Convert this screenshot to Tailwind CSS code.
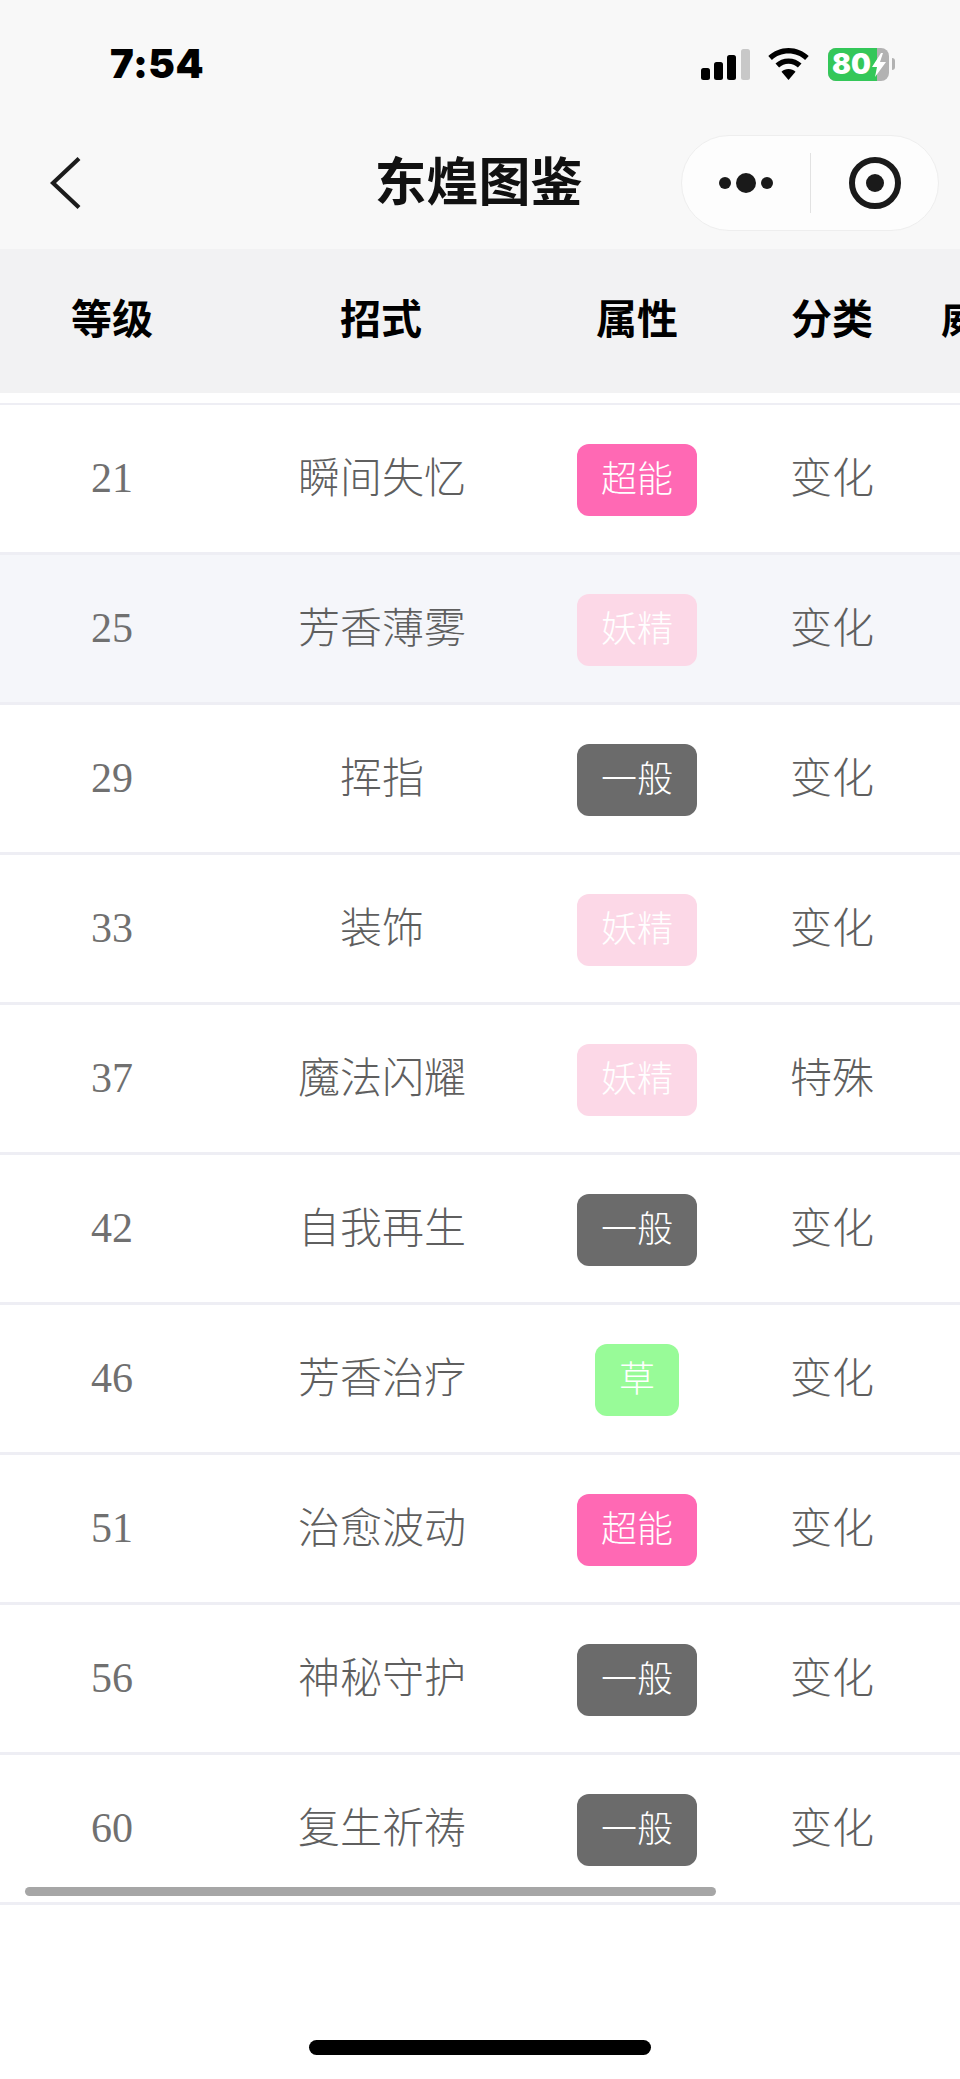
<!DOCTYPE html>
<html lang="zh-CN">
<head>
<meta charset="utf-8">
<title>东煌图鉴</title>
<script src="https://cdn.jsdelivr.net/npm/@tailwindcss/browser@4"></script>
</head>
<body class="bg-white">
<div class="relative w-[960px] h-[2079px] overflow-hidden bg-white font-['Noto_Sans_CJK_SC','Noto_Sans',sans-serif]">
  <header class="bg-[#f8f8f8] h-[249px] flex flex-col">
    <div class="h-[128px] pl-[110px] pr-[65px] flex items-center justify-between">
      <span class="font-['Inter',sans-serif] font-black text-[40px] leading-none text-black tracking-[0.5px]">7:54</span>
      <div class="flex items-center">
        <svg class="w-[49px] h-[31px]" viewBox="0 0 49 31"><rect x="0" y="19" width="9" height="12" rx="2.5" fill="#000"/><rect x="13" y="13" width="9" height="18" rx="2.5" fill="#000"/><rect x="26" y="6" width="9" height="25" rx="2.5" fill="#000"/><rect x="40" y="0" width="9" height="31" rx="2.5" fill="#c8c8c8"/></svg>
        <svg class="ml-[18px] w-[41px] h-[32px]" viewBox="0 0 41 32"><path d="M20.5 0C12.7 0 5.7 3 .3 8l3.6 3.9C8.2 7.800 14 5.500 20.500 5.500S32.800 7.800 37.100 11.900L40.700 8C35.300 3 28.300 0 20.500 0Z" fill="#000"/><path d="M20.500 10.500c-5 0-9.600 1.900-13 5.100l3.600 3.900c2.500-2.300 5.800-3.700 9.400-3.700s6.900 1.400 9.400 3.700l3.600-3.900c-3.400-3.200-8-5.100-13-5.100Z" fill="#000"/><path d="M20.500 21c-2.700 0-5.200 1-7 2.700L20.500 32l7-8.300C25.700 22 23.200 21 20.500 21Z" fill="#000"/></svg>
        <div class="relative ml-[19px] w-[61px] h-[33px] rounded-[8px] overflow-hidden bg-[#b2b2b2] flex">
          <div class="w-[49px] h-full bg-[#34c759] pl-[4px] flex items-center">
            <span class="font-['Inter',sans-serif] font-black text-[28px] leading-none text-white">80</span>
          </div>
          <svg class="absolute left-[44px] top-[5px] w-[14px] h-[24px]" viewBox="0 0 14 24"><path d="M9 0 0 14h5l-2 10 11-15H8l3-9Z" fill="#fff"/></svg>
        </div>
        <div class="ml-[3px] w-[3px] h-[12px] rounded-r-[3px] bg-[#b2b2b2]"></div>
      </div>
    </div>
    <div class="relative mt-[7px] h-[96px] flex items-center justify-center">
      <svg class="absolute left-[50px] top-[21px] w-[32px] h-[54px]" viewBox="0 0 32 54"><path d="M29 2.500 3 27l26 24.500" fill="none" stroke="#1c1c1c" stroke-width="4.200"/></svg>
      <h1 class="text-[52px] leading-none font-semibold text-[#111] pb-[8px] pr-[3px]">东煌图鉴</h1>
      <div class="absolute left-[681px] top-0 w-[258px] h-[96px] rounded-full bg-[#fdfdfd] border border-[#eeeeee] flex items-center">
        <div class="w-[128px] flex justify-center items-center gap-[5px]">
          <span class="w-[12px] h-[12px] rounded-full bg-[#1a1a1a]"></span>
          <span class="w-[20px] h-[20px] rounded-full bg-[#1a1a1a]"></span>
          <span class="w-[12px] h-[12px] rounded-full bg-[#1a1a1a]"></span>
        </div>
        <div class="w-px h-[60px] bg-[#e2e2e2]"></div>
        <div class="flex-1 flex justify-center">
          <div class="w-[52px] h-[52px] rounded-full border-[6px] border-[#1a1a1a] flex items-center justify-center">
            <span class="w-[18px] h-[18px] rounded-full bg-[#1a1a1a]"></span>
          </div>
        </div>
      </div>
    </div>
  </header>

  <div class="grid grid-cols-[224px_314px_198px_192px_108px] h-[144px] pb-[10px] bg-[#f2f2f3] items-center text-center text-[41px] font-bold leading-none text-black w-[1036px]">
    <div>等级</div><div>招式</div><div>属性</div><div>分类</div><div>威力</div>
  </div>

  <div class="pt-[10px] text-[#5f5f5f] text-[42px] leading-none font-light">
    <div class="border-t-[2px] border-[#eeeef4]">
      <div class="grid grid-cols-[224px_316px_194px_196px] h-[150px] items-center text-center border-b-[3px] border-[#eeeef4]">
        <div class="font-['Liberation_Serif',serif] font-normal text-[#707070] pb-[2px]">21</div><div class="pb-[8px]">瞬间失忆</div>
        <div class="flex justify-center pt-[2px]"><span class="h-[72px] px-[24px] rounded-[12px] bg-[#ff69b4] text-white text-[36px] leading-[64px]">超能</span></div><div class="pb-[8px]">变化</div>
      </div>
      <div class="grid grid-cols-[224px_316px_194px_196px] h-[150px] items-center text-center border-b-[3px] border-[#eeeef4] bg-[#f5f6fa]">
        <div class="font-['Liberation_Serif',serif] font-normal text-[#707070] pb-[2px]">25</div><div class="pb-[8px]">芳香薄雾</div>
        <div class="flex justify-center pt-[2px]"><span class="h-[72px] px-[24px] rounded-[12px] bg-[#fcd8e7] text-white text-[36px] leading-[64px]">妖精</span></div><div class="pb-[8px]">变化</div>
      </div>
      <div class="grid grid-cols-[224px_316px_194px_196px] h-[150px] items-center text-center border-b-[3px] border-[#eeeef4]">
        <div class="font-['Liberation_Serif',serif] font-normal text-[#707070] pb-[2px]">29</div><div class="pb-[8px]">挥指</div>
        <div class="flex justify-center pt-[2px]"><span class="h-[72px] px-[24px] rounded-[12px] bg-[#6b6b6b] text-white text-[36px] leading-[64px]">一般</span></div><div class="pb-[8px]">变化</div>
      </div>
      <div class="grid grid-cols-[224px_316px_194px_196px] h-[150px] items-center text-center border-b-[3px] border-[#eeeef4]">
        <div class="font-['Liberation_Serif',serif] font-normal text-[#707070] pb-[2px]">33</div><div class="pb-[8px]">装饰</div>
        <div class="flex justify-center pt-[2px]"><span class="h-[72px] px-[24px] rounded-[12px] bg-[#fcd8e7] text-white text-[36px] leading-[64px]">妖精</span></div><div class="pb-[8px]">变化</div>
      </div>
      <div class="grid grid-cols-[224px_316px_194px_196px] h-[150px] items-center text-center border-b-[3px] border-[#eeeef4]">
        <div class="font-['Liberation_Serif',serif] font-normal text-[#707070] pb-[2px]">37</div><div class="pb-[8px]">魔法闪耀</div>
        <div class="flex justify-center pt-[2px]"><span class="h-[72px] px-[24px] rounded-[12px] bg-[#fcd8e7] text-white text-[36px] leading-[64px]">妖精</span></div><div class="pb-[8px]">特殊</div>
      </div>
      <div class="grid grid-cols-[224px_316px_194px_196px] h-[150px] items-center text-center border-b-[3px] border-[#eeeef4]">
        <div class="font-['Liberation_Serif',serif] font-normal text-[#707070] pb-[2px]">42</div><div class="pb-[8px]">自我再生</div>
        <div class="flex justify-center pt-[2px]"><span class="h-[72px] px-[24px] rounded-[12px] bg-[#6b6b6b] text-white text-[36px] leading-[64px]">一般</span></div><div class="pb-[8px]">变化</div>
      </div>
      <div class="grid grid-cols-[224px_316px_194px_196px] h-[150px] items-center text-center border-b-[3px] border-[#eeeef4]">
        <div class="font-['Liberation_Serif',serif] font-normal text-[#707070] pb-[2px]">46</div><div class="pb-[8px]">芳香治疗</div>
        <div class="flex justify-center pt-[2px]"><span class="h-[72px] px-[24px] rounded-[12px] bg-[#98fb98] text-white text-[36px] leading-[64px]">草</span></div><div class="pb-[8px]">变化</div>
      </div>
      <div class="grid grid-cols-[224px_316px_194px_196px] h-[150px] items-center text-center border-b-[3px] border-[#eeeef4]">
        <div class="font-['Liberation_Serif',serif] font-normal text-[#707070] pb-[2px]">51</div><div class="pb-[8px]">治愈波动</div>
        <div class="flex justify-center pt-[2px]"><span class="h-[72px] px-[24px] rounded-[12px] bg-[#ff69b4] text-white text-[36px] leading-[64px]">超能</span></div><div class="pb-[8px]">变化</div>
      </div>
      <div class="grid grid-cols-[224px_316px_194px_196px] h-[150px] items-center text-center border-b-[3px] border-[#eeeef4]">
        <div class="font-['Liberation_Serif',serif] font-normal text-[#707070] pb-[2px]">56</div><div class="pb-[8px]">神秘守护</div>
        <div class="flex justify-center pt-[2px]"><span class="h-[72px] px-[24px] rounded-[12px] bg-[#6b6b6b] text-white text-[36px] leading-[64px]">一般</span></div><div class="pb-[8px]">变化</div>
      </div>
      <div class="grid grid-cols-[224px_316px_194px_196px] h-[150px] items-center text-center border-b-[3px] border-[#eeeef4]">
        <div class="font-['Liberation_Serif',serif] font-normal text-[#707070] pb-[2px]">60</div><div class="pb-[8px]">复生祈祷</div>
        <div class="flex justify-center pt-[2px]"><span class="h-[72px] px-[24px] rounded-[12px] bg-[#6b6b6b] text-white text-[36px] leading-[64px]">一般</span></div><div class="pb-[8px]">变化</div>
      </div>
    </div>
  </div>

  <div class="absolute left-[25px] top-[1887px] w-[691px] h-[9px] rounded-full bg-[#a6a6a6]"></div>
  <div class="absolute left-[309px] top-[2040px] w-[342px] h-[15px] rounded-full bg-black"></div>
</div>
</body>
</html>
